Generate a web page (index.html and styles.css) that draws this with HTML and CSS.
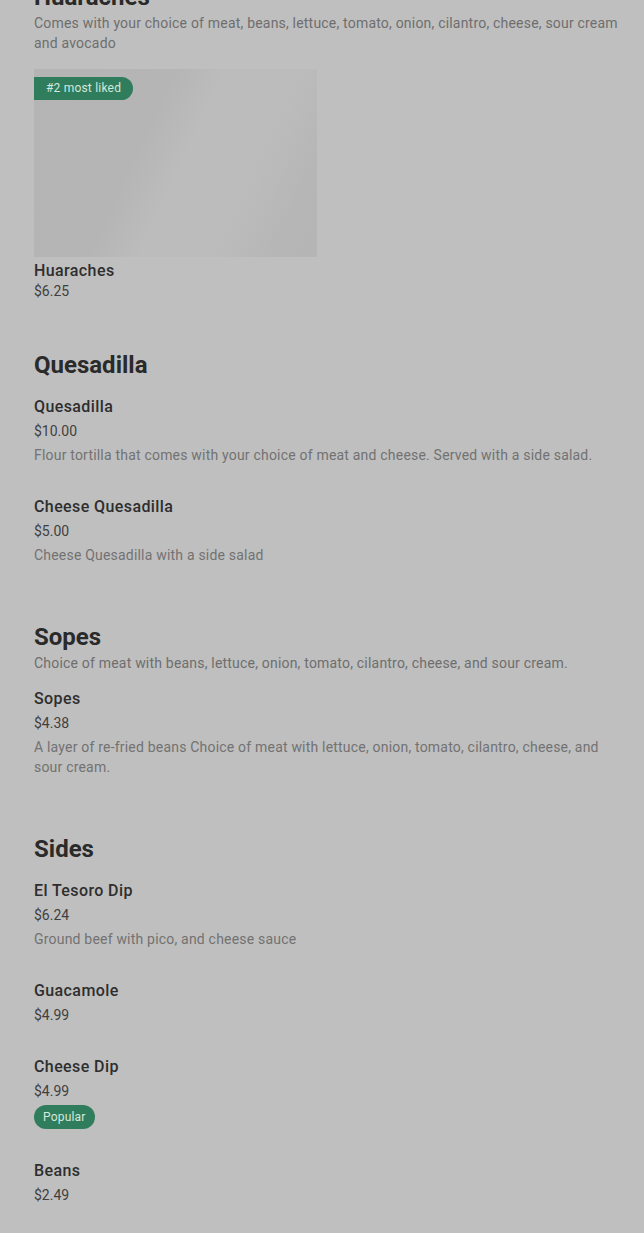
FILE: index.html
```html
<!DOCTYPE html>
<html lang="en">
<head>
<meta charset="utf-8">
<title>Menu</title>
<link rel="stylesheet" href="styles.css">
</head>
<body>
<main class="menu">
  <section class="section section-first">
    <h2 class="section-title">Huaraches</h2>
    <p class="section-desc">Comes with your choice of meat, beans, lettuce, tomato, onion, cilantro, cheese, sour cream and avocado</p>
    <div class="card-grid">
      <div class="card">
        <div class="card-image">
          <span class="tag-liked">#2 most liked</span>
        </div>
        <div class="card-title">Huaraches</div>
        <div class="card-price">$6.25</div>
      </div>
    </div>
  </section>

  <section class="section">
    <h2 class="section-title">Quesadilla</h2>
    <div class="items">
      <div class="item">
        <div class="item-title">Quesadilla</div>
        <div class="item-price">$10.00</div>
        <p class="item-desc">Flour tortilla that comes with your choice of meat and cheese. Served with a side salad.</p>
      </div>
      <div class="item">
        <div class="item-title">Cheese Quesadilla</div>
        <div class="item-price">$5.00</div>
        <p class="item-desc">Cheese Quesadilla with a side salad</p>
      </div>
    </div>
  </section>

  <section class="section">
    <h2 class="section-title">Sopes</h2>
    <p class="section-desc">Choice of meat with beans, lettuce, onion, tomato, cilantro, cheese, and sour cream.</p>
    <div class="items">
      <div class="item">
        <div class="item-title">Sopes</div>
        <div class="item-price">$4.38</div>
        <p class="item-desc">A layer of re-fried beans Choice of meat with lettuce, onion, tomato, cilantro, cheese, and sour cream.</p>
      </div>
    </div>
  </section>

  <section class="section">
    <h2 class="section-title">Sides</h2>
    <div class="items">
      <div class="item">
        <div class="item-title">El Tesoro Dip</div>
        <div class="item-price">$6.24</div>
        <p class="item-desc">Ground beef with pico, and cheese sauce</p>
      </div>
      <div class="item">
        <div class="item-title">Guacamole</div>
        <div class="item-price">$4.99</div>
      </div>
      <div class="item">
        <div class="item-title">Cheese Dip</div>
        <div class="item-price">$4.99</div>
        <span class="tag-popular">Popular</span>
      </div>
      <div class="item">
        <div class="item-title">Beans</div>
        <div class="item-price">$2.49</div>
      </div>
    </div>
  </section>
</main>
</body>
</html>
```

FILE: styles.css
```css
* {
  box-sizing: border-box;
}

html, body {
  margin: 0;
  padding: 0;
  background: #bfbfbf;
}

body {
  font-family: Roboto, "Liberation Sans", sans-serif;
  color: #2b2b2b;
  overflow: hidden;
}

.menu {
  padding: 0 16px 0 34px;
  margin-top: -19px;
}

.section {
  display: flex;
  flex-direction: column;
  margin-bottom: 26px;
}

.section-title {
  margin: 0;
  font-size: 24px;
  line-height: 32px;
  font-weight: 700;
  color: #2a2a2a;
  letter-spacing: 0;
}

.section-desc {
  margin: 0;
  font-size: 14px;
  line-height: 20px;
  color: #6e6e6e;
  font-weight: 400;
  letter-spacing: 0.2px;
}

.items {
  display: flex;
  flex-direction: column;
  margin-top: 14px;
}

.item {
  display: flex;
  flex-direction: column;
  align-items: flex-start;
  padding-bottom: 28px;
}

.item-title {
  font-size: 16px;
  line-height: 24px;
  font-weight: 500;
  color: #2e2e2e;
  letter-spacing: 0.4px;
}

.item-price {
  font-size: 14px;
  line-height: 24px;
  color: #3f3f3f;
}

.item-desc {
  margin: 2px 0 2px;
  font-size: 14px;
  line-height: 20px;
  color: #727272;
  letter-spacing: 0.2px;
}

.card-grid {
  display: grid;
  grid-template-columns: 1fr 1fr;
  gap: 28px;
  margin-top: 16px;
}

.card {
  display: flex;
  flex-direction: column;
}

.card-image {
  position: relative;
  height: 188px;
  background: linear-gradient(115deg, #b4b4b4 0%, #b5b5b5 38%, #bcbcbc 52%, #bcbcbc 72%, #b6b6b6 88%, #b5b5b5 100%);
}

.tag-liked {
  position: absolute;
  top: 8px;
  left: 0;
  height: 23px;
  line-height: 23px;
  padding: 0 12px;
  background: #2f7d5c;
  color: #d6e7dd;
  font-size: 12px;
  letter-spacing: 0.2px;
  border-radius: 0 12px 12px 0;
}

.card-title {
  margin-top: 2px;
  font-size: 16px;
  line-height: 24px;
  font-weight: 500;
  color: #2e2e2e;
  letter-spacing: 0.4px;
}

.card-price {
  font-size: 14px;
  line-height: 16px;
  color: #3f3f3f;
  margin-bottom: 24px;
}

.tag-popular {
  display: inline-block;
  margin-top: 2px;
  margin-bottom: 2px;
  height: 24px;
  line-height: 24px;
  padding: 0 9px;
  background: #2f7d5c;
  color: #d6e7dd;
  font-size: 12px;
  letter-spacing: 0.2px;
  border-radius: 12px;
}
```
